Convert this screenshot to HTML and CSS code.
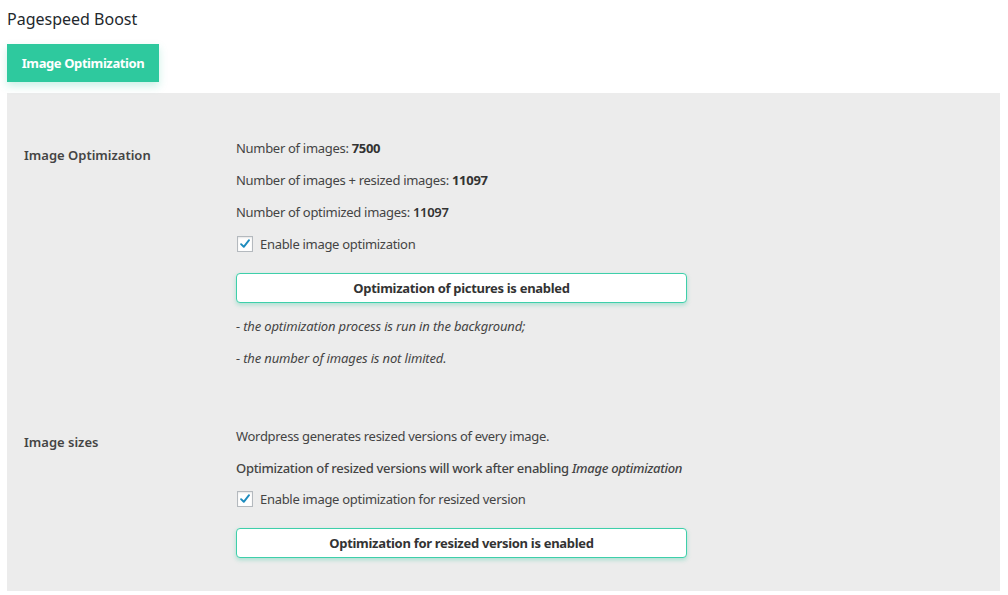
FILE: index.html
```html
<!DOCTYPE html>
<html>
<head>
<meta charset="utf-8">
<link rel="stylesheet" href="styles.css">
</head>
<body>
<div class="wrap">
  <h1 class="title">Pagespeed Boost</h1>
  <div class="tabs"><span class="tab">Image Optimization</span></div>
  <div class="panel">
    <div class="row">
      <div class="label">Image Optimization</div>
      <div class="content">
        <p>Number of images: <b>7500</b></p>
        <p>Number of images + resized images: <b>11097</b></p>
        <p>Number of optimized images: <b class="semi">11097</b></p>
        <label class="check"><span class="box"><svg viewBox="0 0 16 16" width="16" height="16"><path d="M3.5 8.2 L6.6 11.2 L12.6 3.6" fill="none" stroke="#1e8cbe" stroke-width="2.2" stroke-linecap="round" stroke-linejoin="round"/></svg></span>Enable image optimization</label>
        <div class="btn">Optimization of pictures is enabled</div>
        <p class="note">- the optimization process is run in the background;</p>
        <p class="note">- the number of images is not limited.</p>
      </div>
    </div>
    <div class="row row2">
      <div class="label">Image sizes</div>
      <div class="content">
        <p>Wordpress generates resized versions of every image.</p>
        <p class="strong">Optimization of resized versions will work after enabling <i>Image optimization</i></p>
        <label class="check"><span class="box"><svg viewBox="0 0 16 16" width="16" height="16"><path d="M3.5 8.2 L6.6 11.2 L12.6 3.6" fill="none" stroke="#1e8cbe" stroke-width="2.2" stroke-linecap="round" stroke-linejoin="round"/></svg></span>Enable image optimization for resized version</label>
        <div class="btn">Optimization for resized version is enabled</div>
      </div>
    </div>
  </div>
</div>
</body>
</html>
```
FILE: styles.css
```css
html, body { margin: 0; padding: 0; background: #fff; }
body { font-family: "Noto Sans", "Open Sans", sans-serif; color: #444; font-size: 13px; letter-spacing: -0.3px; }
.wrap { padding: 0 8px 0 7px; }
.title { margin: 0; padding-top: 8px; height: 36px; font-size: 16px; font-weight: 400; color: #23282d; line-height: 22px; letter-spacing: 0; }
.tabs { display: flex; height: 49px; }
.tab { display: flex; align-items: center; justify-content: center; width: 152px; height: 38px; background: #2ec99e; color: #fff; font-weight: 700; font-size: 13px; letter-spacing: -0.4px; box-shadow: 0 4px 8px rgba(46, 201, 158, 0.25); }
.panel { background: #ececec; width: 993px; padding: 45px 0 33px 0; box-sizing: border-box; }
.row { display: flex; }
.row2 { margin-top: 58px; }
.label { width: 229px; flex: none; padding-left: 17px; box-sizing: border-box; font-weight: 600; color: #444; line-height: 20px; padding-top: 7px; font-size: 13px; letter-spacing: 0; }
.row2 .label { padding-top: 6px; }
.content { width: 451px; }
.content p { margin: 0 0 12px; line-height: 20px; white-space: nowrap; }
.content p.strong { font-weight: 500; color: #444; margin-bottom: 11px; }
b { font-weight: 700; color: #333; }
b.semi { font-weight: 600; }
.check { display: flex; align-items: center; line-height: 20px; }
.box { width: 14px; height: 14px; border: 1px solid #b4b9be; background: #fff; margin: 0 7px 0 1px; display: flex; align-items: center; justify-content: center; box-shadow: inset 0 1px 2px rgba(0,0,0,0.1); }
.box svg { width: 14px; height: 14px; }
.btn { margin-top: 19px; height: 30px; box-sizing: border-box; border: 1px solid #3ecfaa; border-radius: 4px; background: #fff; display: flex; align-items: center; justify-content: center; font-weight: 700; color: #333; box-shadow: 0 2px 4px rgba(46, 201, 158, 0.35); }
.content p.note { font-style: italic; letter-spacing: -0.15px; }
.btn + .note { margin-top: 13px; }
.content p.note:last-child { margin-bottom: 0; }
```
